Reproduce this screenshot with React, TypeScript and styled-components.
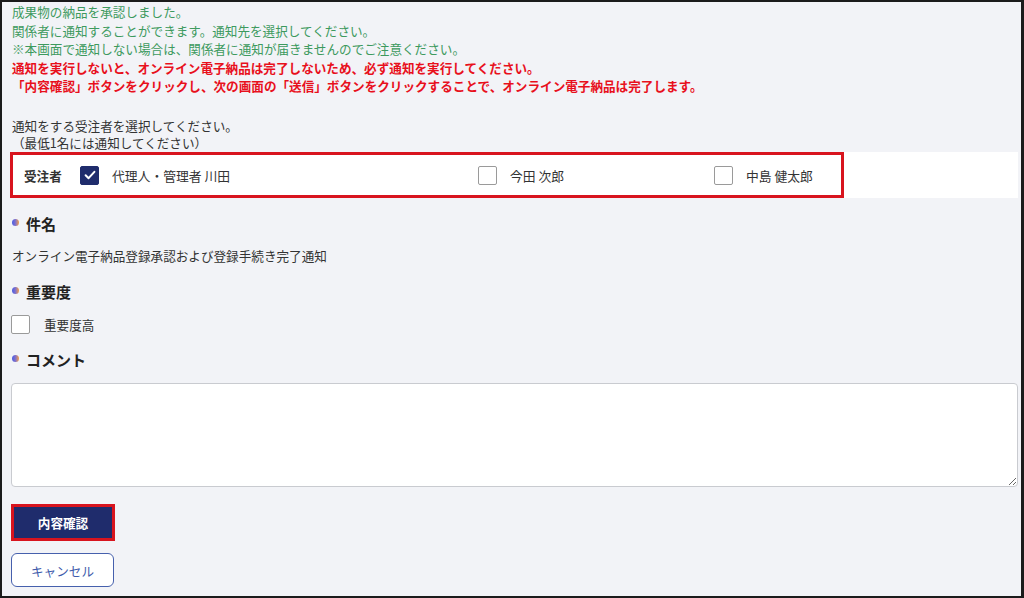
import React from "react";
import styled, { createGlobalStyle } from "styled-components";

const GlobalStyle = createGlobalStyle`
  html, body { margin: 0; padding: 0; background: #ffffff; }
  body {
    font-family: "Noto Sans CJK JP", "Noto Sans", sans-serif;
    color: #333;
  }
`;

const Frame = styled.div`
  box-sizing: border-box;
  width: 1024px;
  height: 598px;
  border: 2px solid #1b1b1b;
  border-right-width: 3px;
  background: #f2f3f7;
  padding: 1px 3px 0 9px;
  overflow: hidden;
`;

const Notice = styled.div`
  padding-left: 1px;
  font-size: 12.6px;
  line-height: 18.5px;
`;

const NoticeLine = styled.div<{ $alert?: boolean }>`
  color: ${(p) => (p.$alert ? "#e8101c" : "#3d9a5e")};
  font-weight: ${(p) => (p.$alert ? 700 : 400)};
  white-space: nowrap;
`;

const Instruction = styled.div`
  margin-top: 21px;
  padding-left: 1px;
  font-size: 12.6px;
  line-height: 17px;
  color: #333;
`;

const RecipientRow = styled.div`
  margin-top: 1.5px;
  height: 46px;
  background: #ffffff;
  display: flex;
`;

const RecipientGroup = styled.div`
  box-sizing: border-box;
  width: 834px;
  height: 46px;
  margin-left: -1px;
  border: 3px solid #d8141e;
  display: flex;
  align-items: center;
  padding-left: 11px;
`;

const RowLabel = styled.div`
  width: 56px;
  font-size: 12.6px;
  font-weight: 700;
  color: #333;
`;

const Option = styled.label<{ $w?: number }>`
  display: flex;
  align-items: center;
  gap: 13px;
  width: ${(p) => (p.$w ? `${p.$w}px` : "auto")};
  font-size: 12.8px;
  color: #333;
`;

const Box = styled.span<{ $checked?: boolean }>`
  box-sizing: border-box;
  width: 19px;
  height: 19px;
  border-radius: 2px;
  display: inline-flex;
  align-items: center;
  justify-content: center;
  background: ${(p) => (p.$checked ? "#1f2c6c" : "#ffffff")};
  border: 1px solid ${(p) => (p.$checked ? "#1f2c6c" : "#9a9a9a")};
  flex: none;
`;

const Heading = styled.h2<{ $top: number }>`
  margin: ${(p) => p.$top}px 0 0 0;
  display: flex;
  align-items: center;
  gap: 7px;
  padding-left: 1px;
  font-size: 15px;
  line-height: 22px;
  font-weight: 700;
  color: #222;
`;

const Dot = styled.span`
  width: 7px;
  height: 7px;
  border-radius: 50%;
  background: linear-gradient(to right, #4d5ee0 0%, #7a6ed0 45%, #f5a04a 100%);
  margin-top: -4px;
  flex: none;
`;

const Subject = styled.div`
  margin-top: 12px;
  padding-left: 1px;
  font-size: 12.6px;
  line-height: 18px;
  color: #333;
`;

const PriorityRow = styled.label`
  margin-top: 12px;
  display: flex;
  align-items: center;
  gap: 14px;
  height: 19px;
  font-size: 12.6px;
  color: #333;
`;

const Comment = styled.textarea`
  display: block;
  box-sizing: border-box;
  margin-top: 12px;
  width: 1007px;
  height: 104px;
  border: 1px solid #c9cbd0;
  border-radius: 4px;
  background: #fff;
  resize: both;
  font-family: inherit;
  outline: none;
`;

const ConfirmButton = styled.button`
  display: flex;
  align-items: center;
  justify-content: center;
  box-sizing: border-box;
  margin-top: 17px;
  width: 104px;
  height: 37px;
  border: 3px solid #d8141e;
  background: #1f2c6c;
  color: #ffffff;
  font-family: inherit;
  font-size: 12.6px;
  font-weight: 700;
  padding: 0;
`;

const CancelButton = styled.button`
  display: flex;
  align-items: center;
  justify-content: center;
  box-sizing: border-box;
  margin-top: 12px;
  width: 103px;
  height: 34px;
  border: 1px solid #4660ad;
  border-radius: 6px;
  background: #ffffff;
  color: #3d5aab;
  font-family: inherit;
  font-size: 12.6px;
  padding: 0;
`;

const Check = () => (
  <svg width="14" height="14" viewBox="0 0 14 14">
    <path
      d="M2.6 7.2 L5.6 10.2 L11.4 3.8"
      fill="none"
      stroke="#ffffff"
      strokeWidth="2"
      strokeLinecap="round"
      strokeLinejoin="round"
    />
  </svg>
);

const recipients = [
  { name: "代理人・管理者 川田", checked: true, width: 398 },
  { name: "今田 次郎", checked: false, width: 236 },
  { name: "中島 健太郎", checked: false },
];

export default function App() {
  return (
    <>
      <GlobalStyle />
      <Frame>
        <Notice>
          <NoticeLine>成果物の納品を承認しました。</NoticeLine>
          <NoticeLine>関係者に通知することができます。通知先を選択してください。</NoticeLine>
          <NoticeLine>※本画面で通知しない場合は、関係者に通知が届きませんのでご注意ください。</NoticeLine>
          <NoticeLine $alert>
            通知を実行しないと、オンライン電子納品は完了しないため、必ず通知を実行してください。
          </NoticeLine>
          <NoticeLine $alert>
            「内容確認」ボタンをクリックし、次の画面の「送信」ボタンをクリックすることで、オンライン電子納品は完了します。
          </NoticeLine>
        </Notice>

        <Instruction>
          通知をする受注者を選択してください。
          <br />
          （最低1名には通知してください）
        </Instruction>

        <RecipientRow>
          <RecipientGroup>
            <RowLabel>受注者</RowLabel>
            {recipients.map((r) => (
              <Option key={r.name} $w={r.width}>
                <Box $checked={r.checked}>{r.checked && <Check />}</Box>
                {r.name}
              </Option>
            ))}
          </RecipientGroup>
        </RecipientRow>

        <Heading $top={15}>
          <Dot />
          件名
        </Heading>
        <Subject>オンライン電子納品登録承認および登録手続き完了通知</Subject>

        <Heading $top={16}>
          <Dot />
          重要度
        </Heading>
        <PriorityRow>
          <Box />
          重要度高
        </PriorityRow>

        <Heading $top={15}>
          <Dot />
          コメント
        </Heading>
        <Comment />

        <ConfirmButton>内容確認</ConfirmButton>
        <CancelButton>キャンセル</CancelButton>
      </Frame>
    </>
  );
}
